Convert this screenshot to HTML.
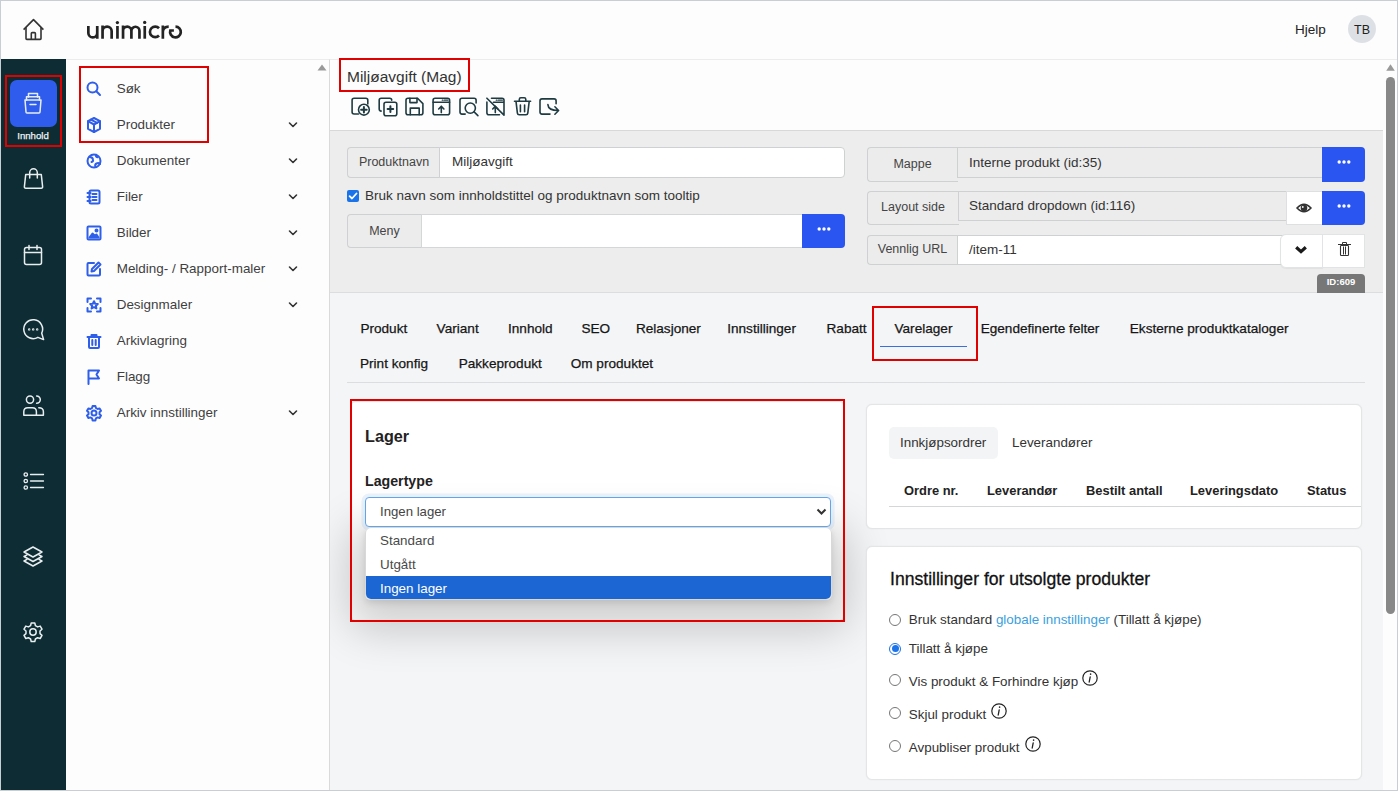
<!DOCTYPE html>
<html><head><meta charset="utf-8">
<style>
*{box-sizing:border-box;margin:0;padding:0}
html,body{width:1398px;height:791px;overflow:hidden;background:#fdfdfd;font-family:"Liberation Sans",sans-serif;color:#333}
.a{position:absolute}
.t{position:absolute;white-space:nowrap;line-height:1}
#frame{position:absolute;left:0;top:0;width:1398px;height:791px;border:1px solid #c9ced5;z-index:100;pointer-events:none}
.red{position:absolute;border:2px solid #e00000;z-index:50}
svg{position:absolute;overflow:visible}
.side svg{fill:none;stroke:#e8eef0;stroke-width:1.5;stroke-linecap:round;stroke-linejoin:round}
.nav .t{font-size:13.45px;color:#3f3f3f}
.nav svg.ic{fill:none;stroke:#2f5ee8;stroke-width:2;stroke-linecap:round;stroke-linejoin:round}
.nav svg.ch{fill:none;stroke:#333;stroke-width:1.6;stroke-linecap:round;stroke-linejoin:round}
.tabs .t{font-size:13.6px;color:#161616;-webkit-text-stroke:0.25px #161616}
.tb svg{fill:none;stroke:#1f3b42;stroke-width:1.6;stroke-linecap:round;stroke-linejoin:round}
</style></head><body>
<div id="frame"></div>

<!-- header -->
<div class="a" style="left:0;top:0;width:1398px;height:59px;background:#fdfdfd"></div>
<svg style="left:20px;top:17px" width="26" height="26" viewBox="0 0 26 26"><g fill="none" stroke="#333" stroke-width="1.6" stroke-linejoin="round"><path d="M3.6 12.6 L13.5 2.6 L23.4 12.6"/><path d="M6 10.3 V21.6 q0 0.8 0.8 0.8 H20.2 q0.8 0 0.8 -0.8 V10.3"/><path d="M11.3 22.4 V16.5 q0-0.9 0.9-0.9 h2.3 q0.9 0 0.9 0.9 V22.4"/></g></svg>
<svg style="left:0;top:0" width="200" height="59" viewBox="0 0 200 59"><g fill="none" stroke="#232323" stroke-width="2.7">
<path d="M88.35 26 V32.9 A4.45 4.45 0 0 0 97.25 32.9 M97.25 26 V38.7"/>
<path d="M102.55 38.7 V25.5 M102.55 31.1 A4.55 4.55 0 0 1 111.65 31.1 V38.7"/>
<path d="M117.45 26 V38.7"/>
<path d="M123.05 38.7 V25.5 M123.05 30.8 A4.17 4.17 0 0 1 131.4 30.8 V38.7 M131.4 30.8 A4.02 4.02 0 0 1 139.45 30.8 V38.7"/>
<path d="M144.75 26 V38.7"/>
<path d="M159 28.3 A5.25 5.25 0 1 0 159 35.5"/>
<path d="M162.85 38.7 V25.5 M162.85 31.5 Q163.3 26.7 168.7 26.7"/>
<path d="M175.5 26.65 A5.35 5.35 0 1 1 170.3 30.5 L173.9 30.5"/>
</g><g fill="#232323"><circle cx="117.4" cy="22.6" r="1.65"/><circle cx="144.7" cy="22.4" r="1.65"/></g></svg>
<div class="t" style="left:1295px;top:23px;font-size:13.5px;color:#222">Hjelp</div>
<div class="a" style="left:1348px;top:15px;width:28px;height:28px;border-radius:50%;background:#dde1e6"></div>
<div class="t" style="left:1348px;top:24px;width:28px;text-align:center;font-size:12.5px;color:#222">TB</div>

<!-- dark sidebar -->
<div class="a side" style="left:0;top:59px;width:66px;height:732px;background:#0e2c33">
<div class="a" style="left:10px;top:21px;width:47px;height:47px;border-radius:7px;background:#2f5ced"></div>
<svg style="left:23px;top:33px" width="20" height="22" viewBox="0 0 20 22"><path d="M5.5 1.5 h9 v3.5 M5.5 5 V1.5"/><path d="M3.5 8 V4.8 h13 V8"/><path d="M2 8 h16 l-1 12 q0 1 -1 1 h-12 q-1 0 -1 -1 z"/><path d="M7 12.5 h6"/></svg>
<div class="t" style="left:0;top:71.5px;width:66px;text-align:center;font-size:9.6px;color:#eef4f6;-webkit-text-stroke:0.25px #eef4f6">Innhold</div>
<svg style="left:23px;top:109px" width="21" height="22" viewBox="0 0 21 22"><path d="M6.7 10 V4.6 a3.8 3.8 0 0 1 7.6 0 V10"/><path d="M2.7 6.6 H18.3 L19.6 18.6 q0.2 1.6 -1.4 1.6 H2.8 q-1.6 0 -1.4 -1.6 Z"/></svg>
<svg style="left:23px;top:185px" width="20" height="22" viewBox="0 0 20 22"><rect x="1.5" y="3.5" width="17" height="17" rx="2"/><path d="M1.5 8.5 h17 M6 1.5 v4 M14 1.5 v4"/></svg>
<svg style="left:23px;top:260px" width="22" height="22" viewBox="0 0 22 22"><path d="M14.9 18.34 A9.4 9.4 0 1 1 18.72 14.17 L20.6 20.6 Z"/><circle cx="6.2" cy="10.4" r="0.45"/><circle cx="10.2" cy="10.4" r="0.45"/><circle cx="14.2" cy="10.4" r="0.45"/></svg>
<svg style="left:23px;top:336px" width="22" height="22" viewBox="0 0 22 22"><circle cx="7" cy="4.6" r="3.6"/><path d="M0.8 20.2 V16.8 q0-4 4-4 h4.6 q4 0 4 4 V20.2 Z"/><path d="M13.6 0.9 a3.7 3.7 0 0 1 0 7.4"/><path d="M15.8 12.8 q4.6 0 4.6 4 V20.2 H13.4"/></svg>
<svg style="left:23px;top:413px" width="22" height="18" viewBox="0 0 22 18"><g stroke-width="1.3"><circle cx="2.8" cy="2.5" r="1.7"/><circle cx="2.8" cy="9" r="1.7"/><circle cx="2.8" cy="15.5" r="1.7"/><path d="M7.5 2.5 h13 M7.5 9 h13 M7.5 15.5 h13"/></g></svg>
<svg style="left:23px;top:487px" width="20" height="22" viewBox="0 0 20 22"><path d="M10 1 L19 6 L10 11 L1 6 Z"/><path d="M4 8.8 L1 10.5 L10 15.5 L19 10.5 L16 8.8"/><path d="M4 13.3 L1 15 L10 20 L19 15 L16 13.3"/></svg>
<svg style="left:23px;top:563px" width="20" height="20" viewBox="0 0 20 20"><path d="M8.2 1 h3.6 l0.6 2.6 l2.2 1.3 l2.6 -0.8 l1.8 3.1 l-2 1.8 v2.6 l2 1.8 l-1.8 3.1 l-2.6 -0.8 l-2.2 1.3 l-0.6 2.6 h-3.6 l-0.6 -2.6 l-2.2 -1.3 l-2.6 0.8 l-1.8 -3.1 l2 -1.8 v-2.6 l-2 -1.8 l1.8 -3.1 l2.6 0.8 l2.2 -1.3 z"/><circle cx="10" cy="10" r="3.2"/></svg>
</div>

<!-- nav panel -->
<div class="a" style="left:66px;top:59px;width:264px;height:732px;background:#fdfdfd;border-top:1px solid #ececec;border-right:1px solid #dadada"></div>

<div class="nav">
<svg class="ic" style="left:86px;top:81px" width="16" height="16" viewBox="0 0 16 16"><circle cx="6.5" cy="6.5" r="5"/><path d="M10.3 10.3 L14 14"/></svg>
<div class="t" style="left:116.7px;top:82px">Søk</div>
<svg class="ic" style="left:86px;top:117px" width="16" height="16" viewBox="0 0 16 16"><path d="M8 1 L14 4.2 V11.8 L8 15 L2 11.8 V4.2 Z"/><path d="M2 4.2 L8 7.5 L14 4.2 M8 7.5 V15"/><path d="M5 2.6 L11 5.9"/></svg>
<div class="t" style="left:116.7px;top:118px">Produkter</div>
<svg class="ch" style="left:288px;top:122px" width="10" height="6" viewBox="0 0 10 6"><path d="M1.5 1 L5 4.5 L8.5 1"/></svg>
<svg class="ic" style="left:86px;top:153px" width="16" height="16" viewBox="0 0 16 16"><circle cx="8" cy="8" r="6.5"/><path d="M3.5 4 q3 0 3.5 2.5 q0.5 2 -1.5 2.5 M9.5 14 q-1-2.5 1-3.5 q2-1 3.5 0.5 M10 1.8 q-0.5 2 1.5 2.5"/></svg>
<div class="t" style="left:116.7px;top:154px">Dokumenter</div>
<svg class="ch" style="left:288px;top:158px" width="10" height="6" viewBox="0 0 10 6"><path d="M1.5 1 L5 4.5 L8.5 1"/></svg>
<svg class="ic" style="left:86px;top:189px" width="16" height="16" viewBox="0 0 16 16"><rect x="3.5" y="1.5" width="10" height="13" rx="1.5"/><path d="M6.5 5 h4 M6.5 8 h4 M6.5 11 h4 M1.5 4 h3 M1.5 8 h3 M1.5 12 h3"/></svg>
<div class="t" style="left:116.7px;top:190px">Filer</div>
<svg class="ch" style="left:288px;top:194px" width="10" height="6" viewBox="0 0 10 6"><path d="M1.5 1 L5 4.5 L8.5 1"/></svg>
<svg class="ic" style="left:86px;top:225px" width="16" height="16" viewBox="0 0 16 16"><rect x="1.5" y="1.5" width="13" height="13" rx="1"/><path d="M3.5 12.5 L6.5 8.5 L9 11 L10.5 9.5 L12.5 12.5 Z" fill="#2f5ee8"/><circle cx="10.5" cy="5.5" r="1" fill="#2f5ee8"/></svg>
<div class="t" style="left:116.7px;top:226px">Bilder</div>
<svg class="ch" style="left:288px;top:230px" width="10" height="6" viewBox="0 0 10 6"><path d="M1.5 1 L5 4.5 L8.5 1"/></svg>
<svg class="ic" style="left:86px;top:261px" width="16" height="16" viewBox="0 0 16 16"><path d="M8 2 H2.5 q-1 0 -1 1 V13.5 q0 1 1 1 H13 q1 0 1-1 V8"/><path d="M12.5 1.5 L14.5 3.5 L8 10 L5.5 10.5 L6 8 Z"/></svg>
<div class="t" style="left:116.7px;top:262px">Melding- / Rapport-maler</div>
<svg class="ch" style="left:288px;top:266px" width="10" height="6" viewBox="0 0 10 6"><path d="M1.5 1 L5 4.5 L8.5 1"/></svg>
<svg class="ic" style="left:86px;top:297px" width="16" height="16" viewBox="0 0 16 16"><path d="M1.5 5 V1.5 H5 M11 1.5 H14.5 V5 M14.5 11 V14.5 H11 M5 14.5 H1.5 V11"/><path d="M8 4.2 L9.2 6.7 L11.8 7 L9.9 8.8 L10.4 11.4 L8 10.1 L5.6 11.4 L6.1 8.8 L4.2 7 L6.8 6.7 Z"/></svg>
<div class="t" style="left:116.7px;top:298px">Designmaler</div>
<svg class="ch" style="left:288px;top:302px" width="10" height="6" viewBox="0 0 10 6"><path d="M1.5 1 L5 4.5 L8.5 1"/></svg>
<svg class="ic" style="left:86px;top:333px" width="16" height="16" viewBox="0 0 16 16"><path d="M1.5 4 H14.5 M5.5 4 V2 H10.5 V4 M3 4 V14 q0 1 1 1 H12 q1 0 1 -1 V4 M6.3 7 V12 M9.7 7 V12"/></svg>
<div class="t" style="left:116.7px;top:334px">Arkivlagring</div>
<svg class="ic" style="left:86px;top:369px" width="16" height="16" viewBox="0 0 16 16"><path d="M2.5 15 V1.5 H13 L10.5 5.5 L13 9.5 H2.5"/></svg>
<div class="t" style="left:116.7px;top:370px">Flagg</div>
<svg class="ic" style="left:86px;top:405px" width="16" height="16" viewBox="0 0 16 16"><path d="M6.6 1 h2.8 l0.5 2 l1.7 1 l2-0.6 l1.4 2.4 l-1.5 1.4 v2 l1.5 1.4 l-1.4 2.4 l-2-0.6 l-1.7 1 l-0.5 2 h-2.8 l-0.5-2 l-1.7-1 l-2 0.6 l-1.4-2.4 l1.5-1.4 v-2 l-1.5-1.4 l1.4-2.4 l2 0.6 l1.7-1 z"/><circle cx="8" cy="8" r="2.5"/></svg>
<div class="t" style="left:116.7px;top:406px">Arkiv innstillinger</div>
<svg class="ch" style="left:288px;top:410px" width="10" height="6" viewBox="0 0 10 6"><path d="M1.5 1 L5 4.5 L8.5 1"/></svg>
<svg style="left:317px;top:64px" width="10" height="7" viewBox="0 0 10 7"><path d="M5 0.5 L9.5 6.5 H0.5 Z" fill="#999"/></svg>
</div>
<div class="red" style="left:79px;top:66px;width:130px;height:77px"></div>
<div class="red" style="left:5px;top:75px;width:57px;height:72px"></div>
<!-- main top -->
<div class="a" style="left:330px;top:59px;width:1053px;height:71px;background:#fdfdfd;border-top:1px solid #ececec"></div>
<div class="a" style="left:330px;top:130px;width:1053px;height:163px;background:#ecedec;border-top:1px solid #d8d8d8;border-bottom:1px solid #dcdddf"></div>
<div class="a" style="left:330px;top:293px;width:1053px;height:498px;background:#f4f5f7"></div>

<!-- title & toolbar -->
<div class="t" style="left:347px;top:69px;font-size:15.5px;color:#333">Miljøavgift (Mag)</div>
<div class="red" style="left:339px;top:58px;width:131px;height:34px"></div>
<div class="tb">
<svg style="left:0;top:0" width="600" height="130" viewBox="0 0 600 130">
<path d="M358.5 114 H354.1 q-2 0 -2-2 V100.2 q0-2 2-2 H365.8 q2 0 2 2 V104"/>
<circle cx="363.9" cy="109.7" r="5.4"/><path d="M363.9 106.9 v5.6 M361.1 109.7 h5.6" stroke-width="2"/>
<path d="M381.2 111.1 q-2 0 -2-2 V100.2 q0-2 2-2 H389.7 q2 0 2 2"/>
<rect x="384" y="102.2" width="12.8" height="13.5" rx="2"/><path d="M390.4 106.3 v5.6 M387.6 109.1 h5.6" stroke-width="2"/>
<path d="M408 98.2 H417.5 L422.9 103.6 V112.8 q0 2 -2 2 H408 q-2 0 -2-2 V100.2 q0-2 2-2 Z"/><path d="M409.9 98.2 V102.6 H417 V98.2"/><path d="M410.3 114.8 V108.1 H419.2 V114.8"/>
<rect x="433.1" y="98.2" width="16.5" height="16.6" rx="2"/><path d="M433.1 102.2 H449.6"/><path d="M442.3 100.2 h0.6 M444.3 100.2 h3.6" stroke-width="1.3"/><path d="M441.3 112.6 V106.4 M438.7 109 L441.3 106.3 L443.9 109"/>
<path d="M465.2 114.1 H462 q-2 0 -2-2 V100.2 q0-2 2-2 H474.1 q2 0 2 2 V103"/><circle cx="470.3" cy="108.1" r="5.1"/><path d="M474.1 111.9 L477.9 115.6"/>
<path d="M486.9 102 V112.8 q0 2 2 2 H499.5 M486.9 98.2 L504 115.1 V100.2 q0-2 -2-2 H491.5 M493.5 102.2 H504"/><path d="M496.3 100.2 h0.6 M498.3 100.2 h4" stroke-width="1.3"/><path d="M495.3 112.6 V106.4 M492.7 109 L495.3 106.3 L497.9 109"/>
<path d="M514.5 101.3 H530.6 M519.3 101.3 V99.4 q0-1.6 1.6-1.6 h3.3 q1.6 0 1.6 1.6 V101.3 M516 101.3 L517.4 113.2 q0.2 1.6 1.8 1.6 H526 q1.6 0 1.8-1.6 L529.2 101.3 M520.4 105 V111.7 M524.6 105 V111.7"/>
<path d="M550 114.1 H542 q-2 0 -2-2 V100.9 q0-2 2-2 H554.1 q2 0 2 2 V103.8"/><path d="M547.9 104.6 q0.4 6 10.6 5.9 M554.9 106.8 L558.6 110.5 L554.9 114.2"/>
</svg>
</div>

<!-- form left -->
<div class="a" style="left:347px;top:147px;width:93px;height:31px;border:1px solid #cfd0d2;border-right:none;border-radius:4px 0 0 4px;background:#ececec"></div>
<div class="t" style="left:347px;top:156px;width:94px;text-align:center;font-size:12.5px;color:#444">Produktnavn</div>
<div class="a" style="left:439px;top:147px;width:406px;height:31px;border:1px solid #cfd0d2;border-radius:0 4px 4px 0;background:#fff"></div>
<div class="t" style="left:452px;top:155px;font-size:13.5px;color:#333">Miljøavgift</div>
<div class="a" style="left:347px;top:190px;width:12px;height:12px;border-radius:2px;background:#1a73e8"></div>
<svg style="left:347px;top:190px" width="12" height="12" viewBox="0 0 12 12"><path d="M2.6 6.2 L5 8.5 L9.5 3.5" fill="none" stroke="#fff" stroke-width="1.8" stroke-linecap="round" stroke-linejoin="round"/></svg>
<div class="t" style="left:365px;top:189px;font-size:13.5px;color:#333">Bruk navn som innholdstittel og produktnavn som tooltip</div>
<div class="a" style="left:347px;top:214px;width:75px;height:34px;border:1px solid #cfd0d2;border-right:none;border-radius:4px 0 0 4px;background:#ececec"></div>
<div class="t" style="left:347px;top:224.5px;width:75px;text-align:center;font-size:12.5px;color:#444">Meny</div>
<div class="a" style="left:421px;top:214px;width:382px;height:34px;border:1px solid #d5d6d8;border-right:none;background:#fff"></div>
<div class="a btn" style="left:802px;top:214px;width:43px;height:34px;border-radius:0 4px 4px 0;background:#2a55f0"></div>
<svg style="left:816.5px;top:226.8px" width="14" height="4" viewBox="0 0 14 4"><g fill="#fff"><circle cx="2.2" cy="2" r="1.7"/><circle cx="7" cy="2" r="1.7"/><circle cx="11.8" cy="2" r="1.7"/></g></svg>

<!-- form right -->
<div class="a" style="left:867px;top:147px;width:91px;height:35px;border:1px solid #cfd0d2;border-right:none;border-radius:4px 0 0 4px;background:#ececec"></div>
<div class="t" style="left:867px;top:158px;width:91px;text-align:center;font-size:12.5px;color:#444">Mappe</div>
<div class="a" style="left:957px;top:147px;width:366px;height:31px;border:1px solid #cfd0d2;border-right:none;background:#ececec"></div>
<div class="t" style="left:969px;top:156px;font-size:13.5px;color:#333">Interne produkt (id:35)</div>
<div class="a" style="left:1322px;top:147px;width:43px;height:35px;border-radius:0 4px 4px 0;background:#2a55f0"></div>
<svg style="left:1336.5px;top:160px" width="14" height="4" viewBox="0 0 14 4"><g fill="#fff"><circle cx="2.2" cy="2" r="1.7"/><circle cx="7" cy="2" r="1.7"/><circle cx="11.8" cy="2" r="1.7"/></g></svg>

<div class="a" style="left:867px;top:191px;width:92px;height:34px;border:1px solid #cfd0d2;border-right:none;border-radius:4px 0 0 4px;background:#ececec"></div>
<div class="t" style="left:867px;top:201px;width:92px;text-align:center;font-size:12.5px;color:#444">Layout side</div>
<div class="a" style="left:958px;top:191px;width:329px;height:30px;border:1px solid #cfd0d2;border-right:none;background:#ececec"></div>
<div class="t" style="left:969px;top:199px;font-size:13.5px;color:#333">Standard dropdown (id:116)</div>
<div class="a" style="left:1286px;top:191px;width:37px;height:34px;border:1px solid #dedfe0;border-right:none;background:#fff"></div>
<svg style="left:1296px;top:201px" width="16" height="14" viewBox="0 0 16 14"><path d="M1 7 Q8 -0.5 15 7 Q8 14.5 1 7 Z" fill="none" stroke="#333" stroke-width="1.5"/><circle cx="8" cy="7" r="3.3" fill="#333"/><circle cx="6.8" cy="6" r="0.9" fill="#fff"/></svg>
<div class="a" style="left:1322px;top:191px;width:43px;height:34px;border-radius:0 4px 4px 0;background:#2a55f0"></div>
<svg style="left:1336.5px;top:204px" width="14" height="4" viewBox="0 0 14 4"><g fill="#fff"><circle cx="2.2" cy="2" r="1.7"/><circle cx="7" cy="2" r="1.7"/><circle cx="11.8" cy="2" r="1.7"/></g></svg>

<div class="a" style="left:867px;top:235px;width:91px;height:30px;border:1px solid #cfd0d2;border-right:none;border-radius:4px 0 0 4px;background:#ececec"></div>
<div class="t" style="left:867px;top:243px;width:91px;text-align:center;font-size:12.5px;color:#444">Vennlig URL</div>
<div class="a" style="left:957px;top:235px;width:330px;height:30px;border:1px solid #cfd0d2;border-right:none;background:#fff"></div>
<div class="t" style="left:969px;top:243px;font-size:13.5px;color:#333">/item-11</div>
<div class="a" style="left:1280px;top:234px;width:43px;height:34px;border:1px solid #e2e3e5;border-radius:6px 0 0 6px;background:#fff;box-shadow:0 1px 1px rgba(0,0,0,.05)"></div>
<svg style="left:1294px;top:245px" width="14" height="10" viewBox="0 0 14 10"><path d="M2.2 2.2 L7 6.6 L11.8 2.2" fill="none" stroke="#1a1a1a" stroke-width="3.2" stroke-linecap="butt" stroke-linejoin="miter"/></svg>
<div class="a" style="left:1322px;top:234px;width:43px;height:34px;border:1px solid #e2e3e5;background:#fff"></div>
<svg style="left:1330px;top:235px" width="30" height="30" viewBox="1330 235 30 30"><path d="M1338 244 H1351 V245 H1338 Z" fill="#333"/><path d="M1342.5 244 V242.5 H1346.5 V244" fill="none" stroke="#333" stroke-width="1"/><rect x="1340.5" y="245.5" width="8" height="10" rx="0.8" fill="none" stroke="#333" stroke-width="1.1"/><path d="M1343.5 246.5 V254.5 M1345.5 246.5 V254.5" stroke="#333" stroke-width="1"/></svg>
<div class="a" style="left:1317px;top:274px;width:48px;height:19px;border-radius:4px 4px 0 0;background:#777"></div>
<div class="t" style="left:1317px;top:277px;width:48px;text-align:center;font-size:9.5px;font-weight:700;color:#fff">ID:609</div>

<!-- tabs -->
<div class="tabs">
<div class="t" style="left:360.4px;top:322px">Produkt</div>
<div class="t" style="left:436.6px;top:322px">Variant</div>
<div class="t" style="left:508.0px;top:322px">Innhold</div>
<div class="t" style="left:581.4px;top:322px">SEO</div>
<div class="t" style="left:635.9px;top:322px">Relasjoner</div>
<div class="t" style="left:727.2px;top:322px">Innstillinger</div>
<div class="t" style="left:826.5px;top:322px">Rabatt</div>
<div class="t" style="left:894.5px;top:322px">Varelager</div>
<div class="t" style="left:980.7px;top:322px">Egendefinerte felter</div>
<div class="t" style="left:1129.8px;top:322px">Eksterne produktkataloger</div>
<div class="t" style="left:360.0px;top:356.5px">Print konfig</div>
<div class="t" style="left:458.7px;top:356.5px">Pakkeprodukt</div>
<div class="t" style="left:570.7px;top:356.5px">Om produktet</div>
</div>
<div class="a" style="left:880px;top:345.5px;width:87px;height:1.5px;background:#3b6fe0"></div>
<div class="a" style="left:347px;top:382px;width:1018px;height:1px;background:#dcdde0"></div>
<div class="red" style="left:872px;top:306px;width:106px;height:55px"></div>

<!-- lager card -->
<div class="a" style="left:351px;top:401px;width:493px;height:220px;background:#fff;border:1px solid #e5e6e8;border-radius:4px"></div>
<div class="t" style="left:365px;top:428px;font-size:16.2px;font-weight:700;color:#222">Lager</div>
<div class="t" style="left:365px;top:474px;font-size:14.2px;font-weight:700;color:#222">Lagertype</div>
<div class="a" style="left:365px;top:497px;width:466px;height:30px;border:1px solid #62a4ea;border-radius:4px;background:#fff;box-shadow:0 0 0 3.5px rgba(110,170,235,.14);z-index:3"></div>
<div class="t" style="left:380px;top:505px;font-size:13.2px;color:#444;z-index:4">Ingen lager</div>
<svg style="left:816px;top:508px;z-index:4" width="11" height="8" viewBox="0 0 11 8"><path d="M1.5 1.5 L5.5 5.5 L9.5 1.5" fill="none" stroke="#333" stroke-width="2"/></svg>
<div class="a" style="left:330px;top:293px;width:1053px;height:498px;overflow:hidden"><div class="a" style="left:35px;top:234px;width:467px;height:73px;border-radius:6px;box-shadow:0 3px 6px rgba(0,0,0,.1),0 14px 44px 16px rgba(0,0,0,.19)"></div></div>
<div class="a" style="left:365px;top:527px;width:467px;height:73px;background:#fff;border:1px solid #d8d8d8;border-radius:6px;overflow:hidden;z-index:4">
  <div class="a" style="left:0;top:48px;width:467px;height:25px;background:#1b66d2"></div>
</div>
<div class="t" style="left:380px;top:534px;font-size:13.4px;color:#4a4a4a;z-index:5">Standard</div>
<div class="t" style="left:380px;top:558px;font-size:13.4px;color:#4a4a4a;z-index:5">Utgått</div>
<div class="t" style="left:380px;top:581.5px;font-size:13.4px;color:#fff;z-index:5">Ingen lager</div>
<div class="red" style="left:350px;top:399px;width:495px;height:223px;z-index:5"></div>

<!-- orders card -->
<div class="a" style="left:866px;top:404px;width:496px;height:125px;background:#fff;border:1px solid #e3e5e6;border-radius:6px;box-shadow:0 0 1.5px rgba(0,0,0,.08)"></div>
<div class="a" style="left:889px;top:427px;width:109px;height:32px;background:#f3f4f6;border-radius:5px"></div>
<div class="t" style="left:900px;top:436px;font-size:13.4px;color:#333">Innkjøpsordrer</div>
<div class="t" style="left:1012px;top:436px;font-size:13.4px;color:#333">Leverandører</div>
<div class="t" style="left:904px;top:483px;font-size:12.9px;font-weight:700;color:#222;margin-top:1.5px">Ordre nr.</div>
<div class="t" style="left:987px;top:483px;font-size:12.9px;font-weight:700;color:#222;margin-top:1.5px">Leverandør</div>
<div class="t" style="left:1086px;top:483px;font-size:12.9px;font-weight:700;color:#222;margin-top:1.5px">Bestilt antall</div>
<div class="t" style="left:1190px;top:483px;font-size:12.9px;font-weight:700;color:#222;margin-top:1.5px">Leveringsdato</div>
<div class="t" style="left:1307px;top:483px;font-size:12.9px;font-weight:700;color:#222;margin-top:1.5px">Status</div>
<div class="a" style="left:889px;top:506px;width:472px;height:1px;background:#d5d6d8"></div>

<!-- settings card -->
<div class="a" style="left:866px;top:546px;width:496px;height:234px;background:#fff;border:1px solid #e3e5e6;border-radius:6px;box-shadow:0 0 1.5px rgba(0,0,0,.08)"></div>
<div class="t" style="left:890px;top:571px;font-size:17.6px;color:#111;-webkit-text-stroke:0.3px #111">Innstillinger for utsolgte produkter</div>
<div class="a" style="left:889px;top:614.2px;width:12px;height:12px;border-radius:50%;background:#fff;border:1px solid #767676"></div>
<div class="t" style="left:908.8px;top:613.0px;font-size:13.4px;color:#333">Bruk standard <span style="color:#3a9fe0">globale innstillinger</span> (Tillatt å kjøpe)</div>
<div class="a" style="left:889px;top:642.7px;width:12px;height:12px;border-radius:50%;background:#fff;border:1px solid #1a73e8"></div>
<div class="a" style="left:891.5px;top:645.2px;width:7px;height:7px;border-radius:50%;background:#1a73e8"></div>
<div class="t" style="left:908.8px;top:641.5px;font-size:13.4px;color:#333">Tillatt å kjøpe</div>
<div class="a" style="left:889px;top:674.0px;width:12px;height:12px;border-radius:50%;background:#fff;border:1px solid #767676"></div>
<div class="t" style="left:908.8px;top:674.7px;font-size:13.4px;color:#333">Vis produkt &amp; Forhindre kjøp</div>
<svg style="left:1082px;top:670.0px" width="16" height="16" viewBox="0 0 16 16"><circle cx="8" cy="8" r="7.2" fill="none" stroke="#222" stroke-width="1.2"/><path d="M8.6 4 v0.3" stroke="#222" stroke-width="1.6" stroke-linecap="round"/><path d="M8.2 6.8 L7.2 12" stroke="#222" stroke-width="1.3" stroke-linecap="round"/></svg>
<div class="a" style="left:889px;top:707.1px;width:12px;height:12px;border-radius:50%;background:#fff;border:1px solid #767676"></div>
<div class="t" style="left:908.8px;top:707.5px;font-size:13.4px;color:#333">Skjul produkt</div>
<svg style="left:991px;top:703.2px" width="16" height="16" viewBox="0 0 16 16"><circle cx="8" cy="8" r="7.2" fill="none" stroke="#222" stroke-width="1.2"/><path d="M8.6 4 v0.3" stroke="#222" stroke-width="1.6" stroke-linecap="round"/><path d="M8.2 6.8 L7.2 12" stroke="#222" stroke-width="1.3" stroke-linecap="round"/></svg>
<div class="a" style="left:889px;top:740.0px;width:12px;height:12px;border-radius:50%;background:#fff;border:1px solid #767676"></div>
<div class="t" style="left:908.8px;top:740.7px;font-size:13.4px;color:#333">Avpubliser produkt</div>
<svg style="left:1025px;top:736.3px" width="16" height="16" viewBox="0 0 16 16"><circle cx="8" cy="8" r="7.2" fill="none" stroke="#222" stroke-width="1.2"/><path d="M8.6 4 v0.3" stroke="#222" stroke-width="1.6" stroke-linecap="round"/><path d="M8.2 6.8 L7.2 12" stroke="#222" stroke-width="1.3" stroke-linecap="round"/></svg>
<!-- scrollbar -->
<div class="a" style="left:1383px;top:59px;width:15px;height:732px;background:#fdfdfd;border-top:1px solid #ececec"></div>
<svg style="left:1386px;top:64px" width="9" height="7" viewBox="0 0 9 7"><path d="M4.5 0.3 L8.8 6.7 H0.2 Z" fill="#999"/></svg>
<div class="a" style="left:1386px;top:77px;width:9px;height:537px;border-radius:5px;background:#888"></div>

</body></html>
